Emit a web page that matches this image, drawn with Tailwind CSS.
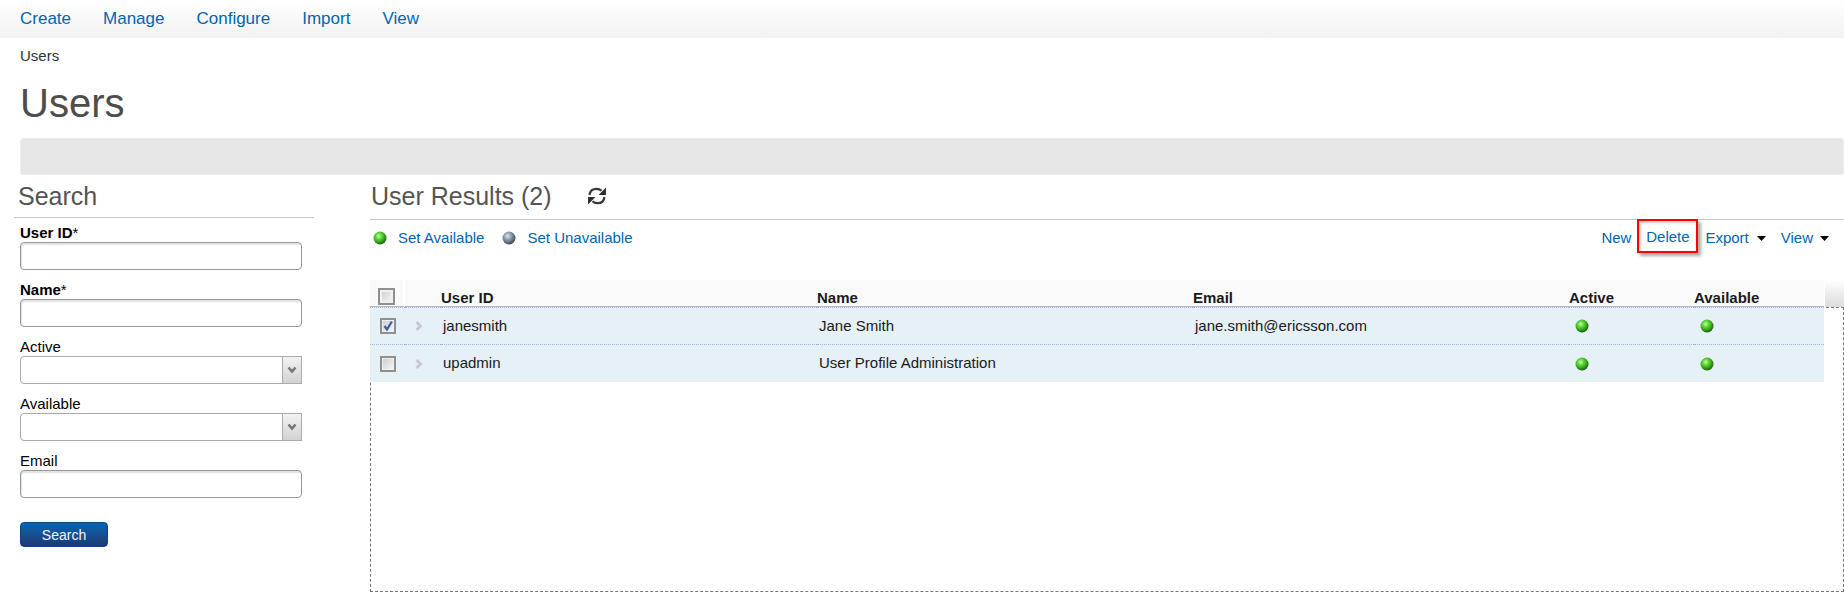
<!DOCTYPE html>
<html lang="en">
<head>
<meta charset="utf-8">
<title>Users</title>
<script src="https://cdn.jsdelivr.net/npm/@tailwindcss/browser@4"></script>
</head>
<body class="flex min-h-screen flex-col overflow-x-hidden bg-white font-['Liberation_Sans',Arial,sans-serif] text-[15px] leading-5 text-black">
<svg class="absolute h-0 w-0" aria-hidden="true">
  <defs>
    <radialGradient id="green" cx="0.4" cy="0.35" r="0.65"><stop offset="0" stop-color="#c4ffa0"/><stop offset="0.35" stop-color="#62d83c"/><stop offset="0.75" stop-color="#2f9a16"/><stop offset="1" stop-color="#1d5c10"/></radialGradient>
    <radialGradient id="grey" cx="0.4" cy="0.35" r="0.65"><stop offset="0" stop-color="#dfe8ee"/><stop offset="0.35" stop-color="#9dabb8"/><stop offset="0.75" stop-color="#61707e"/><stop offset="1" stop-color="#3c4650"/></radialGradient>
    <symbol id="ball-green" viewBox="0 0 14 14"><circle cx="7" cy="7" r="6.5" fill="url(#green)"/></symbol>
    <symbol id="ball-grey" viewBox="0 0 14 14"><circle cx="7" cy="7" r="6.5" fill="url(#grey)"/></symbol>
    <symbol id="chevron" viewBox="0 0 8 10"><path d="M1.5 1 5.500 5 1.5 9" fill="none" stroke="#c6c8ca" stroke-width="2.8"/></symbol>
    <symbol id="down" viewBox="0 0 10 8"><path d="M1.5 1.5 5 5.500 8.500 1.5" fill="none" stroke="#777" stroke-width="2.6"/></symbol>
  </defs>
</svg>
<nav class="flex h-[38px] items-center gap-8 bg-linear-to-b from-white to-[#f2f2f2] px-5 text-[17px] text-[#0066b3]">
  <a href="#">Create</a><a href="#">Manage</a><a href="#">Configure</a><a href="#">Import</a><a href="#">View</a>
</nav>
<div class="px-5 pt-2 text-[#333]">Users</div>
<h1 class="px-5 pt-3 text-[40px] leading-[50px] text-[#4d4d4d]">Users</h1>
<div class="mt-[10px] ml-5 h-[37px] rounded-[3px] border border-[#ececec] bg-[#e6e6e6]"></div>
<main class="flex flex-1">
  <form class="w-[314px] shrink-0 pl-[14px]">
    <h2 class="h-[43px] border-b border-[#c8c8c8] pt-[6px] pl-1 text-[25px] leading-[30px] text-[#555]">Search</h2>
    <div class="flex flex-col gap-[9px] pt-1 pr-3 pl-[6px]">
      <div class="flex flex-col">
        <label for="uid" class="pt-[2px] leading-[18px] font-bold">User ID<span class="font-normal">*</span></label>
        <input id="uid" type="text" class="h-7 rounded border border-[#979797] px-2 shadow-[inset_1px_2px_1px_#e2e2e2]">
      </div>
      <div class="flex flex-col">
        <label for="name" class="pt-[2px] leading-[18px] font-bold">Name<span class="font-normal">*</span></label>
        <input id="name" type="text" class="h-7 rounded border border-[#979797] px-2 shadow-[inset_1px_2px_1px_#e2e2e2]">
      </div>
      <div class="flex flex-col">
        <label for="active" class="pt-[2px] leading-[18px]">Active</label>
        <div class="relative flex">
          <select id="active" class="h-7 flex-1 appearance-none rounded-l border border-[#a9a9ae] bg-white px-2"><option></option></select>
          <span class="pointer-events-none absolute inset-y-0 right-0 flex w-5 items-center justify-center border border-[#a9a9ae] bg-linear-to-b from-[#f3f3f3] to-[#d2d2d2]"><svg class="h-2 w-[10px]"><use href="#down"/></svg></span>
        </div>
      </div>
      <div class="flex flex-col">
        <label for="avail" class="pt-[2px] leading-[18px]">Available</label>
        <div class="relative flex">
          <select id="avail" class="h-7 flex-1 appearance-none rounded-l border border-[#a9a9ae] bg-white px-2"><option></option></select>
          <span class="pointer-events-none absolute inset-y-0 right-0 flex w-5 items-center justify-center border border-[#a9a9ae] bg-linear-to-b from-[#f3f3f3] to-[#d2d2d2]"><svg class="h-2 w-[10px]"><use href="#down"/></svg></span>
        </div>
      </div>
      <div class="flex flex-col">
        <label for="email" class="pt-[2px] leading-[18px]">Email</label>
        <input id="email" type="text" class="h-7 rounded border border-[#979797] px-2 shadow-[inset_1px_2px_1px_#e2e2e2]">
      </div>
      <button type="button" class="mt-[15px] h-[25px] w-[88px] rounded border border-[#14417f] bg-linear-to-b from-[#0066b3] to-[#1b3a73] text-[14px] leading-5 text-[#f0f4f8]">Search</button>
    </div>
  </form>
  <section class="ml-14 flex min-w-0 flex-1 flex-col">
    <div class="flex h-[45px] items-start gap-9 border-b border-[#c8c8c8] pt-[6px] pl-px">
      <h2 class="text-[25px] leading-[30px] text-[#555]">User Results (2)</h2>
      <button type="button" aria-label="Refresh" class="mt-[6px]">
        <svg class="h-[18px] w-[18px]" viewBox="0 0 18 18"><path d="M1.500 8C2 4 5 1.800 8.500 1.800c2.200 0 3.800.7 5 2" fill="none" stroke="#3a3a3a" stroke-width="2.200"/><path d="M18 .5V8h-7.500z" fill="#2e2e2e"/><path d="M16.500 10c-.5 4-3.500 6.200-7 6.200-2.200 0-3.800-.7-5-2" fill="none" stroke="#3a3a3a" stroke-width="2.200"/><path d="M0 17.500V10h7.500z" fill="#2e2e2e"/></svg>
      </button>
    </div>
    <div class="flex h-[60px] items-start justify-between pr-[15px] text-[#0066b3]">
      <div class="flex gap-[18px] pt-2 pl-[3px]">
        <a href="#" class="flex items-center gap-[11px]"><svg class="h-[14px] w-[14px]"><use href="#ball-green"/></svg>Set Available</a>
        <a href="#" class="flex items-center gap-[11px]"><svg class="h-[14px] w-[14px]"><use href="#ball-grey"/></svg>Set Unavailable</a>
      </div>
      <div class="flex items-start">
        <button type="button" class="mt-2 mr-[6px]">New</button>
        <button type="button" class="-mt-px h-[34px] w-[61px] border-2 border-[#f00] pt-[2px] shadow-[3px_3px_3px_#aaa,inset_2px_2px_3px_#ccc]">Delete</button>
        <button type="button" class="mt-2 ml-[7px] flex items-center gap-2">Export<svg class="h-[5px] w-[9px]" viewBox="0 0 9 5"><path d="M0 0h9L4.500 5z"/></svg></button>
        <button type="button" class="mt-2 ml-[15px] flex items-center gap-[7px]">View<svg class="h-[5px] w-[9px]" viewBox="0 0 9 5"><path d="M0 0h9L4.500 5z"/></svg></button>
      </div>
    </div>
    <div class="relative flex flex-1 flex-col">
      <div class="absolute inset-x-0 top-[27px] bottom-px border border-dashed border-[#777]"></div>
      <div class="absolute top-0 right-0 h-[27px] w-[19px] bg-linear-to-b from-white to-[#dcdcdc]"></div>
      <div class="relative pr-5">
        <table class="w-full table-fixed border-separate border-spacing-0 text-left text-[#1a1a1a]">
          <colgroup><col class="w-[35px]"><col class="w-[36px]"><col class="w-[376px]"><col class="w-[376px]"><col class="w-[376px]"><col class="w-[125px]"><col></colgroup>
          <thead>
            <tr class="h-[27px] leading-4">
              <th class="border-r-2 border-b border-r-white border-b-[#b4bac4] bg-[#fafafa] p-0"><input type="checkbox" aria-label="Select all" class="mt-[7px] ml-2 block h-[17px] w-[17px] appearance-none border-2 border-[#8e8f8f] bg-linear-to-br from-[#c9cdd2] to-[#f8f8f8] shadow-[inset_0_0_0_2px_#f0f0f0]"></th>
              <th class="border-b border-[#b4bac4] bg-[#fafafa] p-0"></th>
              <th class="border-b border-[#b4bac4] bg-[#fafafa] p-0 pt-[10px]">User ID</th>
              <th class="border-b border-[#b4bac4] bg-[#fafafa] p-0 pt-[10px]">Name</th>
              <th class="border-b border-[#b4bac4] bg-[#fafafa] p-0 pt-[10px]">Email</th>
              <th class="border-b border-[#b4bac4] bg-[#fafafa] p-0 pt-[10px]">Active</th>
              <th class="border-b border-[#b4bac4] bg-[#fafafa] p-0 pt-[10px]">Available</th>
            </tr>
          </thead>
          <tbody class="bg-[#e5f0f7]">
            <tr class="h-[37px]">
              <td class="border-t border-dotted border-[#9fb2e0] p-0"><label class="relative ml-[10px] block h-4 w-4"><input type="checkbox" checked aria-label="Select janesmith" class="block h-4 w-4 appearance-none border-2 border-[#8e8f8f] bg-linear-to-br from-[#c9cdd2] to-[#f8f8f8] shadow-[inset_0_0_0_1px_#f0f0f0]"><svg class="pointer-events-none absolute inset-0 h-4 w-4" viewBox="0 0 16 16"><path d="M4.500 8 7 11.500 11.800 3.500" fill="none" stroke="#465b9e" stroke-width="2.300"/></svg></label></td>
              <td class="border-t border-dotted border-[#9fb2e0] p-0"><svg class="ml-[10px] h-[10px] w-2"><use href="#chevron"/></svg></td>
              <td class="border-t border-dotted border-[#9fb2e0] p-0 pl-[2px]">janesmith</td>
              <td class="border-t border-dotted border-[#9fb2e0] p-0 pl-[2px]">Jane Smith</td>
              <td class="border-t border-dotted border-[#9fb2e0] p-0 pl-[2px]">jane.smith@ericsson.com</td>
              <td class="border-t border-dotted border-[#9fb2e0] p-0 pl-[6px]"><svg class="h-[14px] w-[14px]" role="img" aria-label="Active"><use href="#ball-green"/></svg></td>
              <td class="border-t border-dotted border-[#9fb2e0] p-0 pl-[6px]"><svg class="h-[14px] w-[14px]" role="img" aria-label="Available"><use href="#ball-green"/></svg></td>
            </tr>
            <tr class="h-[38px]">
              <td class="border-t border-dotted border-[#9fb2e0] p-0"><input type="checkbox" aria-label="Select upadmin" class="ml-[10px] block h-4 w-4 appearance-none border-2 border-[#8e8f8f] bg-linear-to-br from-[#c9cdd2] to-[#f8f8f8] shadow-[inset_0_0_0_1px_#f0f0f0]"></td>
              <td class="border-t border-dotted border-[#9fb2e0] p-0"><svg class="ml-[10px] h-[10px] w-2"><use href="#chevron"/></svg></td>
              <td class="border-t border-dotted border-[#9fb2e0] p-0 pb-[2px] pl-[2px]">upadmin</td>
              <td class="border-t border-dotted border-[#9fb2e0] p-0 pb-[2px] pl-[2px]">User Profile Administration</td>
              <td class="border-t border-dotted border-[#9fb2e0] p-0"></td>
              <td class="border-t border-dotted border-[#9fb2e0] p-0 pl-[6px]"><svg class="h-[14px] w-[14px]" role="img" aria-label="Active"><use href="#ball-green"/></svg></td>
              <td class="border-t border-dotted border-[#9fb2e0] p-0 pl-[6px]"><svg class="h-[14px] w-[14px]" role="img" aria-label="Available"><use href="#ball-green"/></svg></td>
            </tr>
          </tbody>
        </table>
      </div>
    </div>
  </section>
</main>
</body>
</html>
